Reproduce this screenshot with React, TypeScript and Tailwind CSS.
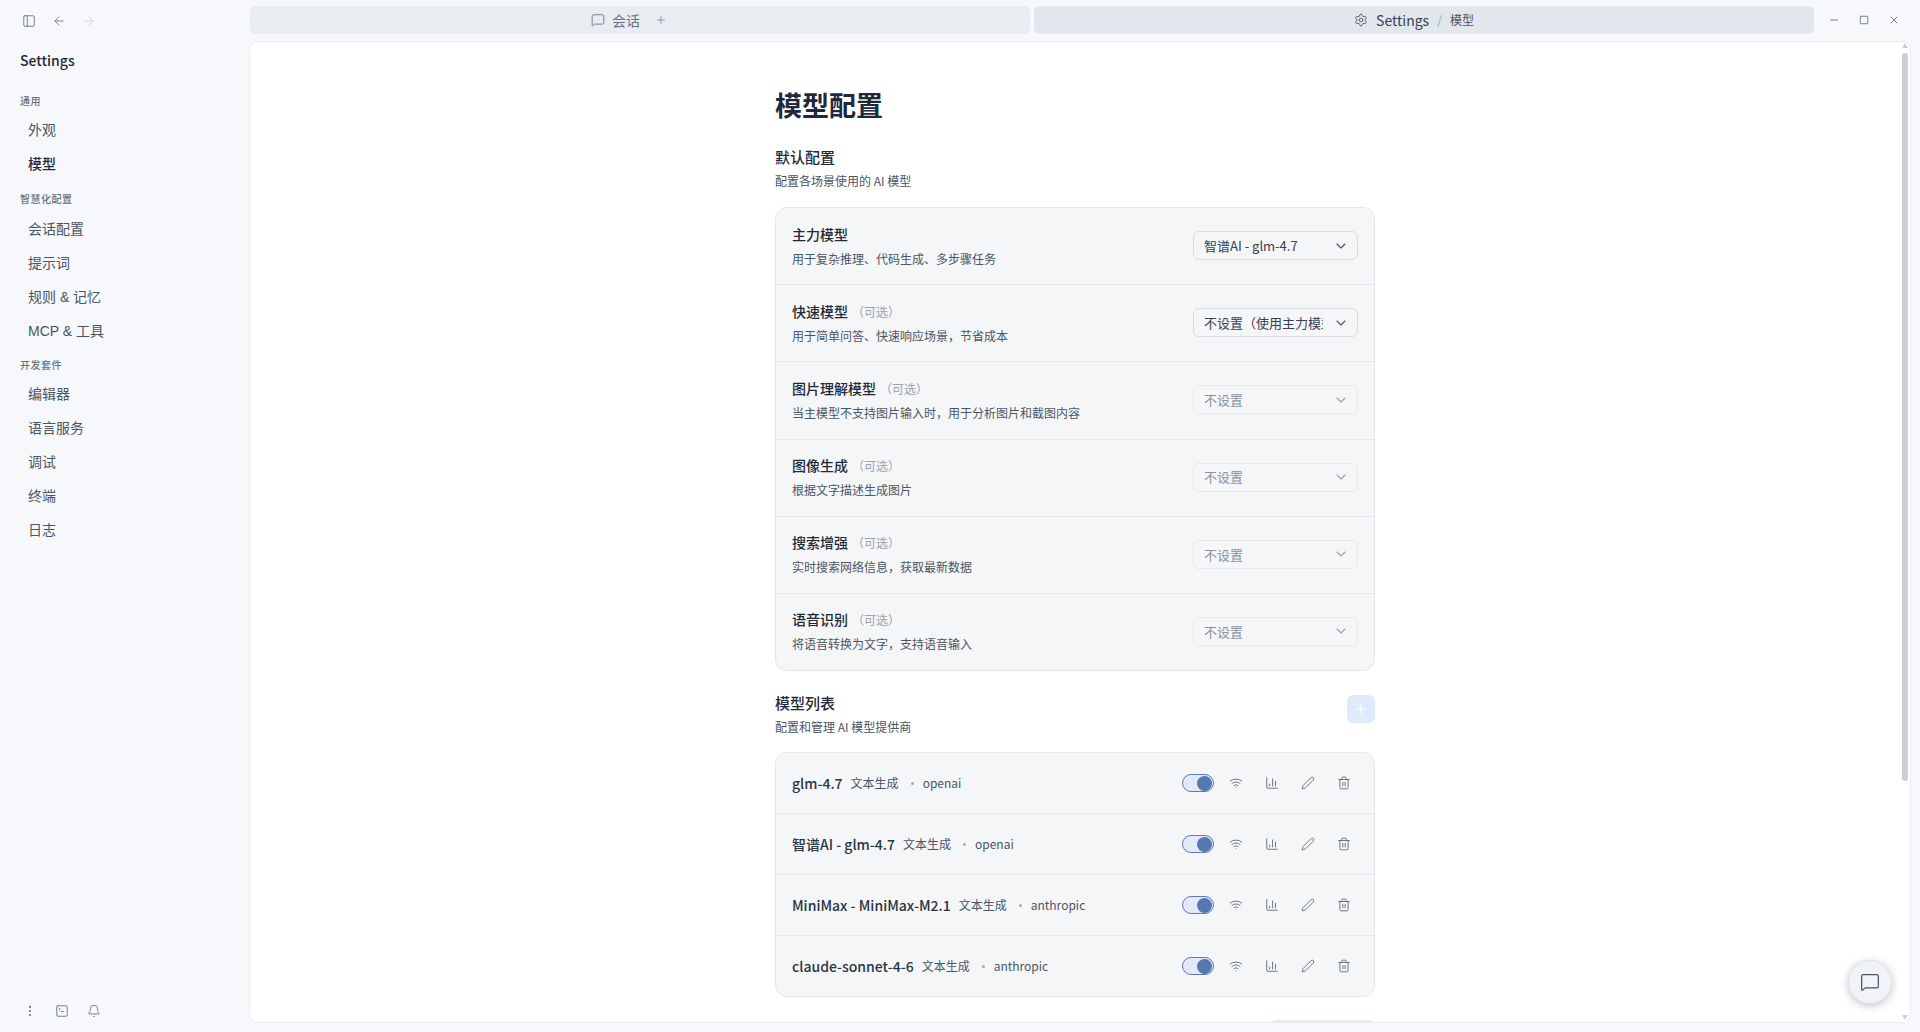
import React from "react";
import { PanelLeft, ArrowLeft, ArrowRight, EllipsisVertical, SquareTerminal, Bell, MessageSquare, Plus, Settings, Minus, Square, X, ChevronDown, Wifi, ChartColumn, Pen, Trash2 } from "lucide-react";

const FONT = "[font-family:'Noto_Sans_CJK_SC','Noto_Sans',sans-serif]";

const nav: { title: string; items: string[]; group: string; first: string }[] = [
  { title: "通用", items: ["外观", "模型"], group: "mb-[11px]", first: "mt-[5px]" },
  { title: "智慧化配置", items: ["会话配置", "提示词", "规则 & 记忆", "MCP & 工具"], group: "mb-[10px]", first: "mt-[6px]" },
  { title: "开发套件", items: ["编辑器", "语言服务", "调试", "终端", "日志"], group: "mb-[10px]", first: "mt-[5px]" },
];

const rows = [
  { label: "主力模型", desc: "用于复杂推理、代码生成、多步骤任务", value: "智谱AI - glm-4.7", on: true, opt: false },
  { label: "快速模型", desc: "用于简单问答、快速响应场景，节省成本", value: "不设置（使用主力模型）", on: true, opt: true },
  { label: "图片理解模型", desc: "当主模型不支持图片输入时，用于分析图片和截图内容", value: "不设置", on: false, opt: true },
  { label: "图像生成", desc: "根据文字描述生成图片", value: "不设置", on: false, opt: true },
  { label: "搜索增强", desc: "实时搜索网络信息，获取最新数据", value: "不设置", on: false, opt: true },
  { label: "语音识别", desc: "将语音转换为文字，支持语音输入", value: "不设置", on: false, opt: true },
];

const models = [
  { name: "glm-4.7", provider: "openai" },
  { name: "智谱AI - glm-4.7", provider: "openai" },
  { name: "MiniMax - MiniMax-M2.1", provider: "anthropic" },
  { name: "claude-sonnet-4-6", provider: "anthropic" },
];

function Sidebar() {
  return (
    <aside className="w-[249px] h-full shrink-0 flex flex-col pl-5 pb-[14px]">
      <div className="h-[41px] flex items-center gap-4 pl-[2px] text-[#6b7280]">
        <PanelLeft size={14} strokeWidth={1.5} />
        <ArrowLeft size={14} strokeWidth={1.5} />
        <ArrowRight size={14} strokeWidth={1.5} className="text-[#cbd2dc]" />
      </div>
      <div className="mt-2 text-sm leading-[22px] font-medium text-[#1e293b]">Settings</div>
      <nav className="mt-[23px] flex-1 flex flex-col">
        {nav.map((g) => (
          <div key={g.title} className={`flex flex-col ${g.group}`}>
            <div className="h-[14px] leading-[14px] text-[10px] tracking-[0.05em] font-medium text-[#6b7280]">{g.title}</div>
            {g.items.map((it, i) => (
              <div
                key={it}
                className={`h-[34px] flex items-center pl-2 text-sm [font-family:'Liberation_Sans','Noto_Sans_CJK_SC',sans-serif] ${i === 0 ? g.first : ""} ${it === "模型" ? "text-[#1f2937] font-medium" : "text-[#4b5563]"}`}
              >
                {it}
              </div>
            ))}
          </div>
        ))}
      </nav>
      <div className="flex items-center gap-[18px] pl-[3px] text-[#6b7280]">
        <EllipsisVertical size={14} strokeWidth={1.75} />
        <SquareTerminal size={14} strokeWidth={1.5} />
        <Bell size={14} strokeWidth={1.5} />
      </div>
    </aside>
  );
}

function TopBar() {
  return (
    <div className="h-[41px] shrink-0 flex items-start pt-[6px] pl-px">
      <div className="w-[780px] h-[28px] rounded-md bg-[#e9ecf1] flex items-center justify-center pr-[22px] text-[#6b7280]">
        <MessageSquare size={14} strokeWidth={1.5} />
        <span className="ml-[7px] text-sm leading-none">会话</span>
        <Plus size={12} strokeWidth={1.75} className="ml-[15px] text-[#858d9a]" />
      </div>
      <div className="ml-1 w-[780px] h-[28px] rounded-md bg-[#e2e7ee] flex items-center justify-center pr-[20px]">
        <Settings size={14} strokeWidth={1.5} className="text-[#4b5563]" />
        <span className="ml-[8px] text-sm text-[#374151]">Settings</span>
        <span className="ml-2 text-xs text-[#9ca3af]">/</span>
        <span className="ml-2 text-xs text-[#4b5563]">模型</span>
      </div>
      <div className="flex-1 flex items-center justify-around h-[28px] pl-[4px] pr-[11px] text-[#4b5563]">
        <Minus size={12} strokeWidth={1.5} />
        <Square size={10} strokeWidth={1.75} />
        <X size={12} strokeWidth={1.5} />
      </div>
    </div>
  );
}

function SettingRow({ r, last }: { r: (typeof rows)[number]; last: boolean }) {
  return (
    <div className={`flex-1 flex items-center justify-between px-4 ${last ? "" : "border-b border-[#e3e6eb]"}`}>
      <div className="flex flex-col">
        <div className="flex items-center h-5">
          <span className="text-sm font-medium text-[#1f2937]">{r.label}</span>
          {r.opt && <span className="ml-[4px] mt-[2px] text-xs text-[#9ca3af]">（可选）</span>}
        </div>
        <div className="mt-[5px] text-xs leading-[20px] text-[#4b5563]">{r.desc}</div>
      </div>
      <div
        className={`mb-px w-[165px] h-[29px] flex items-center rounded-md border pl-[10px] pr-2 text-[13px] ${
          r.on ? "border-[#d9dde4] text-[#374151]" : "border-[#e5e8ed] text-[#8b929e]"
        }`}
      >
        <span className="w-[119px] shrink-0 overflow-hidden whitespace-nowrap">{r.value}</span>
        <ChevronDown size={16} strokeWidth={1.75} className={`ml-auto ${r.on ? "text-[#4b5563]" : "text-[#9ca3af]"}`} />
      </div>
    </div>
  );
}

function ModelRow({ m, last }: { m: (typeof models)[number]; last: boolean }) {
  return (
    <div className={`flex-1 flex items-center justify-between pl-4 pr-[23px] ${last ? "" : "border-b border-[#e3e6eb]"}`}>
      <div className="flex items-center">
        <span className="text-sm font-medium text-[#2b3544]">{m.name}</span>
        <span className="ml-2 text-xs text-[#4b5563]">文本生成</span>
        <span className="w-[3px] h-[3px] rounded-full bg-[#a3abb7] ml-[12px]" />
        <span className="ml-[9px] text-xs text-[#4b5563]">{m.provider}</span>
      </div>
      <div className="flex items-center text-[#5b6472]">
        <div className="w-8 h-[18px] rounded-full border border-[#5a7cb6] bg-[#e4e8f8] flex items-center justify-end pr-px">
          <div className="w-[15px] h-[15px] rounded-full bg-[#5578b3]" />
        </div>
        <Wifi size={14} strokeWidth={1.5} className="ml-[15px]" />
        <ChartColumn size={14} strokeWidth={1.5} className="ml-[22px]" />
        <Pen size={14} strokeWidth={1.5} className="ml-[22px]" />
        <Trash2 size={14} strokeWidth={1.5} className="ml-[22px]" />
      </div>
    </div>
  );
}

function Scrollbar() {
  return (
    <div className="w-[10px] shrink-0 flex flex-col items-center pt-[1px] pb-[2px] pr-px">
      <div className="w-0 h-0 border-x-[3px] border-x-transparent border-b-[5px] border-b-[#d0d0d0]" />
      <div className="mt-[5px] w-[6px] h-[728px] rounded-full bg-[#cfcfcf]" />
      <div className="mt-auto w-0 h-0 border-x-[3px] border-x-transparent border-t-[5px] border-t-[#d0d0d0]" />
    </div>
  );
}

function Panel() {
  return (
    <div className="relative flex-1 min-h-0 mb-[9px] mr-[9px] rounded-lg bg-white border border-[#e9ecf0] flex overflow-hidden">
      <div className="flex-1 min-w-0 overflow-hidden">
        <div className="mx-auto w-[600px] pt-[41px]">
          <h1 className="text-[27px] leading-[44px] font-bold text-[#1e293b]">模型配置</h1>
          <h2 className="mt-[19px] text-[15px] leading-[22px] font-medium text-[#1f2937]">默认配置</h2>
          <p className="mt-[3px] text-xs leading-[20px] text-[#4b5563]">配置各场景使用的 AI 模型</p>
          <div className="mt-4 h-[464px] flex flex-col rounded-xl border border-[#e3e6eb] bg-[#f5f6f8]">
            {rows.map((r, i) => (
              <SettingRow key={r.label} r={r} last={i === rows.length - 1} />
            ))}
          </div>
          <div className="mt-[21px] flex items-start justify-between">
            <div>
              <h2 className="text-[15px] leading-[22px] font-medium text-[#1f2937]">模型列表</h2>
              <p className="mt-[3px] text-xs leading-[20px] text-[#4b5563]">配置和管理 AI 模型提供商</p>
            </div>
            <div className="mt-[3px] w-7 h-7 rounded-md bg-[#dfeafb] flex items-center justify-center text-white">
              <Plus size={14} strokeWidth={2} />
            </div>
          </div>
          <div className="mt-[15px] h-[245px] flex flex-col rounded-xl border border-[#e3e6eb] bg-[#f5f6f8]">
            {models.map((m, i) => (
              <ModelRow key={m.name} m={m} last={i === models.length - 1} />
            ))}
          </div>
          <div className="mt-[23px] ml-auto w-[105px] h-6 rounded-md bg-[#e6e9ee]" />
        </div>
      </div>
      <Scrollbar />
      <div className="absolute right-[18px] bottom-[18px] w-[44px] h-[44px] rounded-full bg-[#f1f3f8] border border-[#e0e3ea] shadow-[0_2px_8px_rgba(15,23,42,0.25)] flex items-center justify-center text-[#475569]">
        <MessageSquare size={20} strokeWidth={1.5} />
      </div>
    </div>
  );
}

export default function App() {
  return (
    <div className={`h-screen w-full flex overflow-hidden bg-[#f6f8fb] ${FONT}`}>
      <Sidebar />
      <div className="flex-1 min-w-0 h-full flex flex-col">
        <TopBar />
        <Panel />
      </div>
    </div>
  );
}
